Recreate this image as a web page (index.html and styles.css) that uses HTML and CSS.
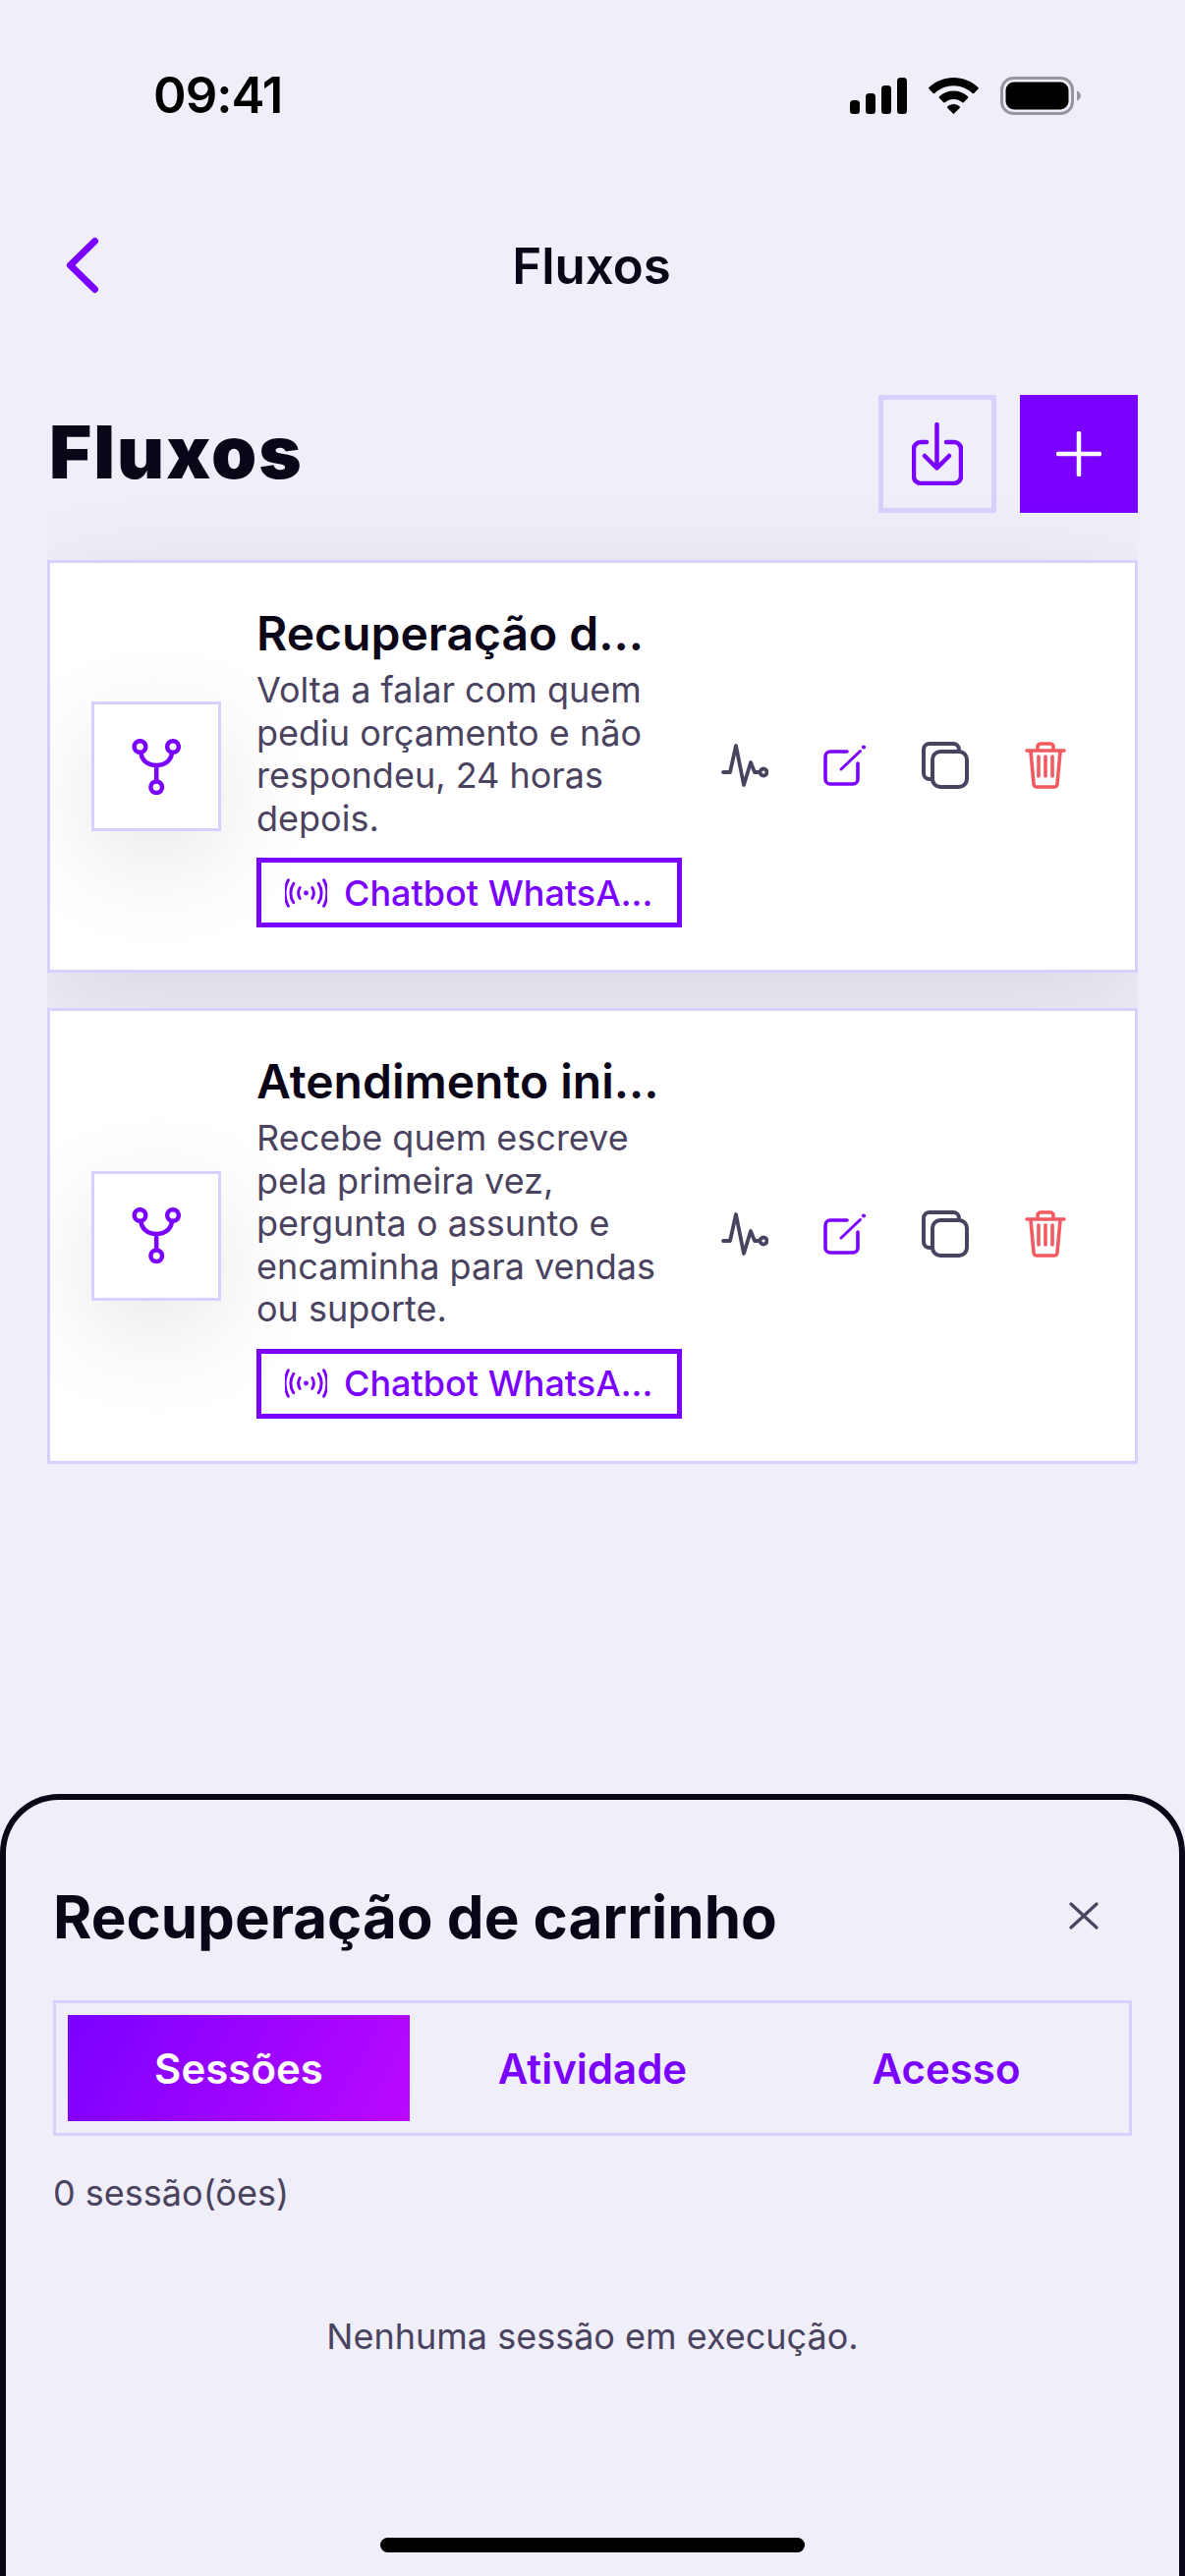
FILE: index.html
```html
<!DOCTYPE html>
<html lang="pt-BR">
<head>
  <meta charset="UTF-8">
  <meta name="viewport" content="width=device-width, initial-scale=1.0">
  <title>Fluxos</title>
  <link rel="stylesheet" href="styles.css">
</head>
<body>
  <div class="screen">
    <div class="status-bar">
      <span class="status-time">09:41</span>
      <div class="status-icons">
        <svg class="icon-signal" width="58" height="37" viewBox="0 0 58 37" fill="#000">
          <rect x="0" y="23" width="10" height="14" rx="3.5"/>
          <rect x="16" y="16" width="10" height="21" rx="3.5"/>
          <rect x="32" y="8" width="10" height="29" rx="3.5"/>
          <rect x="48" y="0" width="10" height="37" rx="3.5"/>
        </svg>
        <svg class="icon-wifi" width="51" height="37" viewBox="0 0 51 37" fill="#000">
          <path d="M25.5 0C35 0 43.8 3.7 50.6 10.1c.4.4.4 1 0 1.4l-4.4 4.5c-.4.4-1 .4-1.4 0C39.7 11.2 32.9 8.3 25.5 8.3S11.3 11.2 6.2 16c-.4.4-1 .4-1.4 0L.4 11.5c-.4-.4-.4-1 0-1.4C7.2 3.7 16 0 25.5 0z"/>
          <path d="M25.5 13.6c5.5 0 10.6 2 14.6 5.7.4.4.4 1 0 1.4l-4.4 4.5c-.4.4-1 .4-1.4 0-2.4-2.1-5.5-3.3-8.8-3.3s-6.4 1.2-8.8 3.3c-.4.4-1 .4-1.4 0l-4.4-4.5c-.4-.4-.4-1 0-1.4 4-3.7 9.1-5.7 14.6-5.7z"/>
          <path d="M25.5 27c2.4 0 4.6.9 6.3 2.4.4.4.4 1 0 1.4l-5.6 5.8c-.4.4-1 .4-1.4 0l-5.6-5.8c-.4-.4-.4-1 0-1.4 1.7-1.5 3.9-2.4 6.3-2.4z"/>
        </svg>
        <svg class="icon-battery" width="82" height="39" viewBox="0 0 82 39">
          <rect x="1.5" y="1.5" width="72" height="36" rx="12" fill="none" stroke="#97959d" stroke-width="3"/>
          <rect x="5.5" y="5.5" width="64" height="28" rx="8.5" fill="#000"/>
          <path d="M78 14.5c2.2.8 4 2.8 4 5s-1.8 4.2-4 5z" fill="#97959d"/>
        </svg>
      </div>
    </div>

    <div class="nav-bar">
      <svg class="nav-back" width="36" height="58" viewBox="0 0 36 58" fill="none" stroke="#7a00ff" stroke-width="7" stroke-linecap="round" stroke-linejoin="round">
        <path d="M30.5 4.5 5.5 29l25 24.5"/>
      </svg>
      <span class="nav-title">Fluxos</span>
    </div>

    <div class="page-head">
      <h1>Fluxos</h1>
      <div class="page-actions">
        <button class="btn-outline">
          <svg width="52" height="64" viewBox="0 0 52 64" fill="none" stroke="#7a00ff" stroke-width="4.5" stroke-linecap="round" stroke-linejoin="round">
            <path d="M15 20H9a7 7 0 0 0-7 7v28a7 7 0 0 0 7 7h34a7 7 0 0 0 7-7V27a7 7 0 0 0-7-7h-8"/>
            <path d="M25.5 2v44M13 34l12.5 12.5L38 34"/>
          </svg>
        </button>
        <button class="btn-solid">
          <svg width="46" height="46" viewBox="0 0 46 46" fill="none" stroke="#fff" stroke-width="4.5" stroke-linecap="round">
            <path d="M23 2v42M2 23h42"/>
          </svg>
        </button>
      </div>
    </div>

    <div class="flow-list">
      <div class="flow-card flow-card-shadow">
        <div class="flow-icon">
          <svg width="50" height="57" viewBox="0 0 50 57" fill="none" stroke="#7a00ff" stroke-width="4.5">
            <circle cx="8.5" cy="8" r="5.8"/><circle cx="42" cy="8" r="5.8"/><circle cx="25.2" cy="49.2" r="5.8"/>
            <path d="M9.5 14c.5 8 7 13 15.7 13s15.200-5 15.700-13M25.200 27v16"/>
          </svg>
        </div>
        <div class="flow-info">
          <div class="flow-title">Recuperação d...</div>
          <p class="flow-desc">Volta a falar com quem pediu orçamento e não respondeu, 24 horas depois.</p>
          <div class="flow-chip">
            <svg width="43" height="30" viewBox="0 0 44 30" fill="none" stroke="#7a00ff" stroke-width="3" stroke-linecap="round">
              <circle cx="22" cy="15" r="2.5" fill="#7a00ff" stroke="none"/>
              <path d="M15.5 9.5c-2 3.500-2 7.500 0 11M28.500 9.500c2 3.500 2 7.500 0 11M9 5c-4 6-4 14 0 20M35 5c4 6 4 14 0 20M3.500 1.500c-4.500 8-4.500 19 0 27M40.500 1.500c4.500 8 4.500 19 0 27"/>
            </svg>
            <span>Chatbot WhatsA...</span>
          </div>
        </div>
        <div class="flow-actions">
          <button class="flow-action">
            <svg width="48" height="44" viewBox="0 0 48 44" fill="none" stroke="#4a4360" stroke-width="3.8" stroke-linecap="round" stroke-linejoin="round">
              <path d="M2 29h7l6-27 8 40 7-23 4 10h5"/><circle cx="43" cy="29" r="3.5"/>
            </svg>
          </button>
          <button class="flow-action">
            <svg width="46" height="44" viewBox="0 0 46 44" fill="none" stroke="#7a00ff" stroke-width="3.6" stroke-linecap="round" stroke-linejoin="round">
              <path d="M25 8H8a5 5 0 0 0-5 5v23a5 5 0 0 0 5 5h23a5 5 0 0 0 5-5V20"/>
              <path d="M19 26 38.5 7.5" stroke-width="3"/>
              <circle cx="42" cy="3.5" r="2.100" fill="#7a00ff" stroke="none"/>
            </svg>
          </button>
          <button class="flow-action">
            <svg width="48" height="48" viewBox="0 0 48 48" fill="none" stroke="#4a4360" stroke-width="4" stroke-linejoin="round">
              <path d="M38 9V8a6 6 0 0 0-6-6H8a6 6 0 0 0-6 6v24a6 6 0 0 0 6 6h2"/><rect x="11" y="10" width="35" height="36" rx="8"/>
            </svg>
          </button>
          <button class="flow-action">
            <svg width="42" height="48" viewBox="0 0 42 48" fill="none" stroke="#f25a5f" stroke-width="3.6" stroke-linecap="round" stroke-linejoin="round">
              <path d="M2 9h38M13 8V5a3 3 0 0 1 3-3h10a3 3 0 0 1 3 3v3"/><path d="M6 10l3 33a3 3 0 0 0 3 3h18a3 3 0 0 0 3-3l3-33"/><path d="M14 15v20M21 15v20M28 15v20"/>
            </svg>
          </button>
        </div>
      </div>

      <div class="flow-card">
        <div class="flow-icon">
          <svg width="50" height="57" viewBox="0 0 50 57" fill="none" stroke="#7a00ff" stroke-width="4.5">
            <circle cx="8.5" cy="8" r="5.8"/><circle cx="42" cy="8" r="5.8"/><circle cx="25.2" cy="49.2" r="5.8"/>
            <path d="M9.5 14c.5 8 7 13 15.7 13s15.200-5 15.700-13M25.200 27v16"/>
          </svg>
        </div>
        <div class="flow-info">
          <div class="flow-title">Atendimento ini...</div>
          <p class="flow-desc">Recebe quem escreve pela primeira vez, pergunta o assunto e encaminha para vendas ou suporte.</p>
          <div class="flow-chip">
            <svg width="43" height="30" viewBox="0 0 44 30" fill="none" stroke="#7a00ff" stroke-width="3" stroke-linecap="round">
              <circle cx="22" cy="15" r="2.5" fill="#7a00ff" stroke="none"/>
              <path d="M15.5 9.5c-2 3.500-2 7.500 0 11M28.500 9.500c2 3.500 2 7.500 0 11M9 5c-4 6-4 14 0 20M35 5c4 6 4 14 0 20M3.500 1.500c-4.500 8-4.500 19 0 27M40.500 1.500c4.500 8 4.500 19 0 27"/>
            </svg>
            <span>Chatbot WhatsA...</span>
          </div>
        </div>
        <div class="flow-actions">
          <button class="flow-action">
            <svg width="48" height="44" viewBox="0 0 48 44" fill="none" stroke="#4a4360" stroke-width="3.8" stroke-linecap="round" stroke-linejoin="round">
              <path d="M2 29h7l6-27 8 40 7-23 4 10h5"/><circle cx="43" cy="29" r="3.5"/>
            </svg>
          </button>
          <button class="flow-action">
            <svg width="46" height="44" viewBox="0 0 46 44" fill="none" stroke="#7a00ff" stroke-width="3.6" stroke-linecap="round" stroke-linejoin="round">
              <path d="M25 8H8a5 5 0 0 0-5 5v23a5 5 0 0 0 5 5h23a5 5 0 0 0 5-5V20"/>
              <path d="M19 26 38.5 7.5" stroke-width="3"/>
              <circle cx="42" cy="3.5" r="2.100" fill="#7a00ff" stroke="none"/>
            </svg>
          </button>
          <button class="flow-action">
            <svg width="48" height="48" viewBox="0 0 48 48" fill="none" stroke="#4a4360" stroke-width="4" stroke-linejoin="round">
              <path d="M38 9V8a6 6 0 0 0-6-6H8a6 6 0 0 0-6 6v24a6 6 0 0 0 6 6h2"/><rect x="11" y="10" width="35" height="36" rx="8"/>
            </svg>
          </button>
          <button class="flow-action">
            <svg width="42" height="48" viewBox="0 0 42 48" fill="none" stroke="#f25a5f" stroke-width="3.6" stroke-linecap="round" stroke-linejoin="round">
              <path d="M2 9h38M13 8V5a3 3 0 0 1 3-3h10a3 3 0 0 1 3 3v3"/><path d="M6 10l3 33a3 3 0 0 0 3 3h18a3 3 0 0 0 3-3l3-33"/><path d="M14 15v20M21 15v20M28 15v20"/>
            </svg>
          </button>
        </div>
      </div>
    </div>

    <div class="sheet">
      <div class="sheet-head">
        <h2>Recuperação de carrinho</h2>
        <svg class="sheet-close" width="30" height="28" viewBox="0 0 30 28" fill="none" stroke="#4a4360" stroke-width="3.2" stroke-linecap="round">
          <path d="M2 2l26 24M28 2 2 26"/>
        </svg>
      </div>
      <div class="tabs">
        <div class="tab tab-active">Sessões</div>
        <div class="tab">Atividade</div>
        <div class="tab">Acesso</div>
      </div>
      <p class="session-count">0 sessão(ões)</p>
      <p class="session-empty">Nenhuma sessão em execução.</p>
    </div>
    <div class="home-bar"></div>
  </div>
</body>
</html>
```

FILE: styles.css
```css
* {
  margin: 0;
  padding: 0;
  box-sizing: border-box;
  font-family: 'Inter', sans-serif;
}

body {
  background-color: #f0eff9;
  color: #0a0618;
}

.screen {
  position: relative;
  width: 1206px;
  height: 2622px;
  overflow: hidden;
}

.status-bar {
  height: 195px;
  padding: 66px 106px 0 156px;
  display: flex;
  justify-content: space-between;
  align-items: flex-start;
}

.status-time {
  font-size: 51px;
  font-weight: 600;
  line-height: 62px;
  letter-spacing: -1px;
  color: #000;
}

.status-icons {
  display: flex;
  align-items: center;
  gap: 22px;
  padding-top: 12px;
}

.nav-bar {
  position: relative;
  height: 150px;
  display: flex;
  align-items: center;
  justify-content: center;
}

.nav-back {
  position: absolute;
  left: 66px;
  top: 46px;
}

.nav-title {
  font-size: 51px;
  font-weight: 600;
  margin-right: 2px;
}

.page-head {
  height: 120px;
  margin: 57px 48px 0;
  display: flex;
  justify-content: space-between;
  align-items: center;
}

.page-head h1 {
  font-size: 74px;
  font-weight: 900;
  letter-spacing: 2px;
  margin: 0 0 5px 2px;
}

.page-actions {
  display: flex;
  gap: 24px;
}

.btn-outline,
.btn-solid {
  width: 120px;
  height: 120px;
  display: flex;
  align-items: center;
  justify-content: center;
  border: none;
}

.btn-outline {
  background: transparent;
  border: 5px solid #d8d0ff;
}

.btn-solid {
  background-color: #7a00ff;
}

.flow-list {
  margin: -60px 48px 0;
  padding-top: 108px;
  overflow: hidden;
  display: flex;
  flex-direction: column;
  gap: 36px;
}

.flow-card {
  background: #fff;
  border: 3px solid #d8d0ff;
  padding: 43px 42px;
  display: flex;
  align-items: center;
}

.flow-card-shadow {
  box-shadow: 0 30px 100px rgba(10, 6, 24, 0.1);
}

.flow-icon {
  flex: none;
  width: 132px;
  height: 132px;
  background: #fff;
  border: 3px solid #d8d0ff;
  display: flex;
  align-items: center;
  justify-content: center;
  box-shadow: 0 30px 100px rgba(10, 6, 24, 0.1);
}

.flow-info {
  flex: none;
  width: 433px;
  margin-left: 36px;
}

.flow-title {
  font-size: 48px;
  font-weight: 600;
  line-height: 58px;
}

.flow-desc {
  margin-top: 7px;
  font-size: 36px;
  line-height: 43.5px;
  color: #4a4360;
}

.flow-chip {
  margin-top: 18px;
  height: 71px;
  border: 5px solid #7a00ff;
  display: flex;
  align-items: center;
  gap: 17px;
  padding-left: 24px;
  font-size: 36px;
  font-weight: 500;
  color: #7a00ff;
  white-space: nowrap;
}

.flow-actions {
  margin-left: 16px;
  padding-bottom: 3px;
  display: flex;
  gap: 6px;
}

.flow-action {
  width: 96px;
  height: 96px;
  background: none;
  border: none;
  display: flex;
  align-items: center;
  justify-content: center;
}

.sheet {
  position: absolute;
  left: 0;
  right: 0;
  top: 1826px;
  bottom: 0;
  background-color: #f0eff9;
  border: 6px solid #0a0618;
  border-bottom: none;
  border-radius: 60px 60px 0 0;
  padding: 84px 48px 0;
}

.sheet-head {
  display: flex;
  justify-content: space-between;
  align-items: center;
  padding-right: 34px;
}

.sheet-head h2 {
  font-size: 60px;
  font-weight: 700;
  line-height: 70px;
}

.sheet-close {
  margin-bottom: 2px;
}

.tabs {
  margin-top: 50px;
  height: 138px;
  border: 3px solid #d8d0ff;
  padding: 12px;
  display: grid;
  grid-template-columns: repeat(3, 1fr);
  gap: 12px;
}

.tab {
  display: flex;
  align-items: center;
  justify-content: center;
  font-size: 42px;
  font-weight: 600;
  color: #7a00ff;
}

.tab-active {
  background: linear-gradient(120deg, #7a00ff, #bb08ff);
  color: #fff;
}

.session-count {
  margin-top: 36px;
  font-size: 36px;
  line-height: 44px;
  color: #4a4360;
}

.session-empty {
  margin-top: 102px;
  text-align: center;
  font-size: 36px;
  line-height: 44px;
  color: #4a4360;
}

.home-bar {
  position: absolute;
  left: 387px;
  bottom: 24px;
  width: 432px;
  height: 15px;
  border-radius: 8px;
  background-color: #000;
}
```
